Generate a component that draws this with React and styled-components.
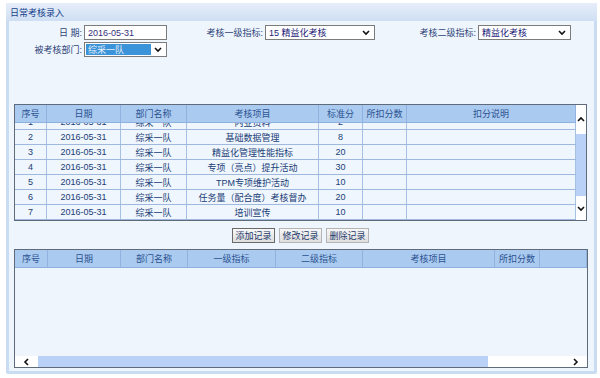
import React from 'react';
import styled, { createGlobalStyle } from 'styled-components';

const GlobalStyle = createGlobalStyle`
  html, body { margin: 0; padding: 0; background: #fff; }
  body {
    font-family: "Liberation Sans", "Noto Sans CJK SC", sans-serif;
    font-size: 8.5px;
    color: #1f3c78;
  }
  * { box-sizing: border-box; }
`;

const Panel = styled.div`
  margin: 3px 0 0 6px;
  width: 591px;
  height: 371px;
  display: flex;
  flex-direction: column;
  background: #cadcf2;
  border-radius: 2px;
`;

const TitleBar = styled.div`
  height: 18px;
  display: flex;
  align-items: center;
  padding-left: 4px;
  background: linear-gradient(#e6eef9, #cfdff3);
  color: #15428b;
  font-size: 9px;
`;

const Body = styled.div`
  flex: 1;
  margin: 0 3px 3px 3px;
  background: #eef5fd;
  padding-top: 4px;
  display: flex;
  flex-direction: column;
`;

const FormRow = styled.div`
  display: flex;
  align-items: center;
  height: 15px;
  padding-left: 11px;
  margin-bottom: 2px;
`;

const Label = styled.span`
  width: ${(p) => p.w}px;
  text-align: right;
  padding-right: 2px;
  color: #2e4677;
  font-size: 9px;
  white-space: nowrap;
`;

const TextBox = styled.div`
  width: ${(p) => p.w}px;
  height: 15px;
  border: 1px solid #7b7b7b;
  background: #fff;
  display: flex;
  align-items: center;
  padding-left: 3px;
  color: #35307c;
  font-size: 9px;
`;

const SelectBox = styled.div`
  width: ${(p) => p.w}px;
  height: 15px;
  border: 1px solid #7b7b7b;
  background: #fff;
  display: flex;
  align-items: stretch;
  padding: 1px;
  color: #1c1c78;
  font-size: 9px;
`;

const SelectValue = styled.div`
  flex: 1;
  display: flex;
  align-items: center;
  padding-left: 2px;
  background: ${(p) => (p.selected ? '#3b94d9' : 'transparent')};
  color: ${(p) => (p.selected ? '#e8eef6' : '#1c1c78')};
`;

const SelectArrow = styled.div`
  width: 14px;
  display: flex;
  align-items: center;
  justify-content: center;
`;

const Chevron = ({ dir = 'down' }) => {
  const pts = {
    down: '1,2 4,5 7,2',
    up: '1,5 4,2 7,5',
    left: '5,1 2,4 5,7',
    right: '2,1 5,4 2,7',
  }[dir];
  return (
    <svg width="8" height="8" viewBox="0 0 8 8">
      <polyline points={pts} fill="none" stroke="#111" strokeWidth="1.6" />
    </svg>
  );
};

const TableFrame = styled.div`
  margin-left: 5px;
  width: ${(p) => p.w}px;
  height: ${(p) => p.h}px;
  border: 1px solid #5f6b7a;
  display: flex;
  flex-direction: ${(p) => p.dir || 'row'};
  background: #eef5fd;
  overflow: hidden;
`;

const TableMain = styled.div`
  flex: 1;
  display: flex;
  flex-direction: column;
  min-width: 0;
`;

const Row = styled.div`
  display: grid;
  grid-template-columns: ${(p) => p.cols};
  height: ${(p) => p.h}px;
  flex-shrink: 0;
  background: ${(p) => (p.head ? '#abcaef' : '#eff6fd')};
  border-bottom: 1px solid ${(p) => (p.head ? '#8eb0dd' : '#9fb9de')};
`;

const Cell = styled.div`
  display: flex;
  align-items: center;
  justify-content: center;
  padding: 0 2px;
  border-right: 1px solid ${(p) => (p.head ? '#8fb2df' : '#a6bfe2')};
  white-space: nowrap;
  overflow: hidden;
  color: ${(p) => (p.head ? '#2a5391' : '#213d76')};
  font-size: 9px;
  &:last-child { border-right: ${(p) => (p.last ? 'none' : '')}; }
`;

const RowsClip = styled.div`
  flex: 1;
  overflow: hidden;
`;

const RowsInner = styled.div`
  margin-top: -8px;
`;

const VScroll = styled.div`
  width: 10px;
  display: flex;
  flex-direction: column;
  background: #fff;
`;

const ScrollBtn = styled.div`
  height: ${(p) => p.h}px;
  width: ${(p) => p.w}px;
  display: flex;
  align-items: center;
  justify-content: center;
  flex-shrink: 0;
  background: #fff;
`;

const Thumb = styled.div`
  background: #b9d1f6;
  flex-shrink: 0;
  height: ${(p) => p.h}px;
  width: ${(p) => p.w}px;
`;

const Track = styled.div`
  flex: 1;
  background: #fff;
`;

const ButtonBar = styled.div`
  display: flex;
  justify-content: center;
  gap: 4px;
  margin: 7px 0 6px 0;
  width: 583px;
`;

const Button = styled.div`
  width: 43px;
  height: 15px;
  display: flex;
  align-items: center;
  justify-content: center;
  border: 1px solid ${(p) => (p.focused ? '#6a6a6a' : '#b4b4b4')};
  background: linear-gradient(#f7f7f7, #dedede);
  color: #243a6a;
  font-size: 9px;
`;

const HScroll = styled.div`
  height: 11px;
  display: flex;
  flex-shrink: 0;
  background: #fff;
`;

const BottomBody = styled.div`
  flex: 1;
`;

const topCols = '32px 74px 66px 132px 44px 44px 169px';
const bottomCols = '33px 73px 67px 88px 87px 132px 45px 47px';

const topHead = ['序号', '日期', '部门名称', '考核项目', '标准分', '所扣分数', '扣分说明'];
const bottomHead = ['序号', '日期', '部门名称', '一级指标', '二级指标', '考核项目', '所扣分数', ''];

const rows = [
  ['1', '2016-05-31', '综采一队', '内业资料', '2'],
  ['2', '2016-05-31', '综采一队', '基础数据管理', '8'],
  ['3', '2016-05-31', '综采一队', '精益化管理性能指标', '20'],
  ['4', '2016-05-31', '综采一队', '专项（亮点）提升活动', '30'],
  ['5', '2016-05-31', '综采一队', 'TPM专项维护活动', '10'],
  ['6', '2016-05-31', '综采一队', '任务量（配合度）考核督办', '20'],
  ['7', '2016-05-31', '综采一队', '培训宣传', '10'],
];

export default function App() {
  return (
    <>
      <GlobalStyle />
      <Panel>
        <TitleBar>日常考核录入</TitleBar>
        <Body>
          <FormRow>
            <Label w={64}>日 期:</Label>
            <TextBox w={83}>2016-05-31</TextBox>
            <Label w={98}>考核一级指标:</Label>
            <SelectBox w={110}>
              <SelectValue>15 精益化考核</SelectValue>
              <SelectArrow><Chevron /></SelectArrow>
            </SelectBox>
            <Label w={103}>考核二级指标:</Label>
            <SelectBox w={93}>
              <SelectValue>精益化考核</SelectValue>
              <SelectArrow><Chevron /></SelectArrow>
            </SelectBox>
          </FormRow>
          <FormRow>
            <Label w={64}>被考核部门:</Label>
            <SelectBox w={83}>
              <SelectValue selected>综采一队</SelectValue>
              <SelectArrow><Chevron /></SelectArrow>
            </SelectBox>
          </FormRow>

          <div style={{ height: 45 }} />

          <TableFrame w={573} h={117}>
            <TableMain>
              <Row head cols={topCols} h={18}>
                {topHead.map((h) => (
                  <Cell head key={h}>{h}</Cell>
                ))}
              </Row>
              <RowsClip>
                <RowsInner>
                  {rows.map((r) => (
                    <Row cols={topCols} h={15} key={r[0]}>
                      {r.map((c, i) => (
                        <Cell key={i}>{c}</Cell>
                      ))}
                      <Cell />
                      <Cell />
                    </Row>
                  ))}
                </RowsInner>
              </RowsClip>
            </TableMain>
            <VScroll>
              <ScrollBtn h={29}><Chevron dir="up" /></ScrollBtn>
              <Thumb h={62} />
              <Track />
              <ScrollBtn h={22}><Chevron dir="down" /></ScrollBtn>
            </VScroll>
          </TableFrame>

          <ButtonBar>
            <Button focused>添加记录</Button>
            <Button>修改记录</Button>
            <Button>删除记录</Button>
          </ButtonBar>

          <TableFrame w={574} h={119} dir="column">
            <Row head cols={bottomCols} h={18}>
              {bottomHead.map((h, i) => (
                <Cell head key={i}>{h}</Cell>
              ))}
            </Row>
            <BottomBody />
            <HScroll>
              <ScrollBtn w={23} h={11}><Chevron dir="left" /></ScrollBtn>
              <Thumb w={450} />
              <Track />
              <ScrollBtn w={23} h={11}><Chevron dir="right" /></ScrollBtn>
            </HScroll>
          </TableFrame>
        </Body>
      </Panel>
    </>
  );
}
